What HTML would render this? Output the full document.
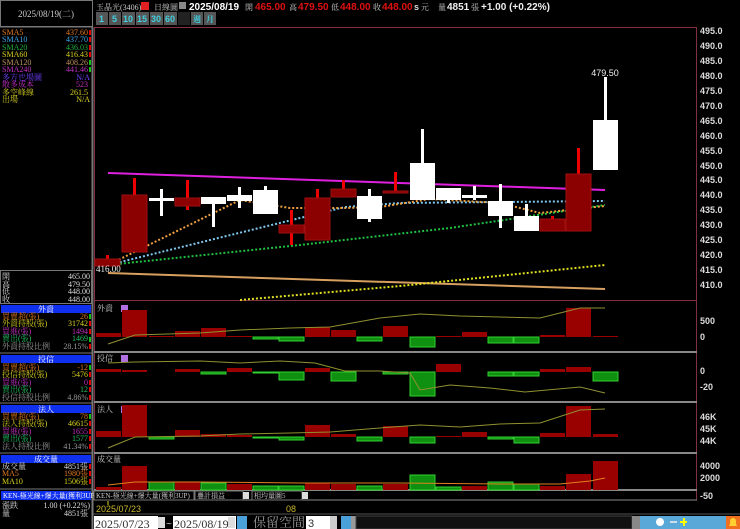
<!DOCTYPE html>
<html><head><meta charset="utf-8"><style>
body{margin:0;background:#000;width:740px;height:529px;overflow:hidden}
svg{display:block}
text{font-family:"Liberation Sans","Noto Sans CJK TC",sans-serif}
text.s,.s text{font-family:"Liberation Serif","Noto Serif CJK TC",serif;font-size:8px}
.ax text{font-size:9px;font-weight:bold;fill:#ddd}
</style></head><body>
<svg width="740" height="529" viewBox="0 0 740 529" xmlns="http://www.w3.org/2000/svg">
<rect width="740" height="529" fill="#000"/>
<rect x="0.5" y="0.5" width="92" height="26" fill="none" stroke="#777"/>
<text x="46" y="17" text-anchor="middle" class="s" fill="#ccc" style="font-size:9px">2025/08/19(二)</text>
<line x1="0" y1="27" x2="93" y2="27" stroke="#777"/>
<line x1="92.5" y1="27" x2="92.5" y2="529" stroke="#777" stroke-width="2"/>
<g class="s">
<text x="2" y="35" fill="#e07820">SMA5</text><text x="88" y="35" text-anchor="end" fill="#e07820">437.60</text>
<text x="2" y="42" fill="#40a8e8">SMA10</text><text x="88" y="42" text-anchor="end" fill="#40a8e8">437.70</text>
<text x="2" y="50" fill="#20b040">SMA20</text><text x="88" y="50" text-anchor="end" fill="#20b040">436.03</text>
<text x="2" y="57" fill="#d8d020">SMA60</text><text x="88" y="57" text-anchor="end" fill="#d8d020">416.43</text>
<text x="2" y="65" fill="#c09060">SMA120</text><text x="88" y="65" text-anchor="end" fill="#c09060">408.26</text>
<text x="2" y="72" fill="#c030c0">SMA240</text><text x="88" y="72" text-anchor="end" fill="#c030c0">441.46</text>
<text x="2" y="80" fill="#7040ff">多方也場圖</text><text x="90" y="80" text-anchor="end" fill="#7040ff">N/A</text>
<text x="2" y="87" fill="#c030c0">散多成本</text><text x="88" y="87" text-anchor="end" fill="#c030c0">523</text>
<text x="2" y="95" fill="#d8d020">多空峰線</text><text x="88" y="95" text-anchor="end" fill="#d8d020">261.5</text>
<text x="2" y="102" fill="#d8d020">出場</text><text x="90" y="102" text-anchor="end" fill="#d8d020">N/A</text>
</g>
<g fill="#e00000"><rect x="89" y="30" width="2" height="5"/><rect x="89" y="37" width="2" height="5"/><rect x="89" y="45" width="2" height="5"/><rect x="89" y="52" width="2" height="5"/></g>
<g fill="#10c010"><rect x="89" y="60" width="2" height="5"/><rect x="89" y="67" width="2" height="5"/></g>
<rect x="0.5" y="270.5" width="91" height="33" fill="none" stroke="#777"/>
<g class="s" fill="#ddd">
<text x="2" y="279">開</text><text x="90" y="279" text-anchor="end">465.00</text>
<text x="2" y="287">高</text><text x="90" y="287" text-anchor="end">479.50</text>
<text x="2" y="294">低</text><text x="90" y="294" text-anchor="end">448.00</text>
<text x="2" y="302">收</text><text x="90" y="302" text-anchor="end">448.00</text>
</g>
<g class="s">
<rect x="1" y="305" width="90" height="8" fill="#1030f0"/><text x="46" y="312" text-anchor="middle" fill="#fff">外資</text>
<text x="2" y="319" fill="#e07820">買賣超(張)</text><text x="88" y="319" text-anchor="end" fill="#e07820">26</text>
<text x="2" y="326" fill="#d8d020">外資持股(張)</text><text x="88" y="326" text-anchor="end" fill="#d8d020">31742</text>
<text x="2" y="334" fill="#c030c0">買進(張)</text><text x="88" y="334" text-anchor="end" fill="#c030c0">1494</text>
<text x="2" y="341" fill="#20c060">賣出(張)</text><text x="88" y="341" text-anchor="end" fill="#20c060">1469</text>
<text x="2" y="349" fill="#999">外資持股比例</text><text x="88" y="349" text-anchor="end" fill="#999">28.15%</text>
<line x1="0" y1="353" x2="92" y2="353" stroke="#777"/>
<rect x="1" y="355" width="90" height="8" fill="#1030f0"/><text x="46" y="362" text-anchor="middle" fill="#fff">投信</text>
<text x="2" y="370" fill="#e07820">買賣超(張)</text><text x="88" y="370" text-anchor="end" fill="#e07820">-12</text>
<text x="2" y="377" fill="#d8d020">投信持股(張)</text><text x="88" y="377" text-anchor="end" fill="#d8d020">5476</text>
<text x="2" y="385" fill="#c030c0">買進(張)</text><text x="88" y="385" text-anchor="end" fill="#c030c0">0</text>
<text x="2" y="392" fill="#20c060">賣出(張)</text><text x="88" y="392" text-anchor="end" fill="#20c060">12</text>
<text x="2" y="400" fill="#999">投信持股比例</text><text x="88" y="400" text-anchor="end" fill="#999">4.86%</text>
<line x1="0" y1="403" x2="92" y2="403" stroke="#777"/>
<rect x="1" y="405" width="90" height="8" fill="#1030f0"/><text x="46" y="412" text-anchor="middle" fill="#fff">法人</text>
<text x="2" y="419" fill="#e07820">買賣超(張)</text><text x="88" y="419" text-anchor="end" fill="#e07820">78</text>
<text x="2" y="426" fill="#d8d020">法人持股(張)</text><text x="88" y="426" text-anchor="end" fill="#d8d020">46615</text>
<text x="2" y="434" fill="#c030c0">買進(張)</text><text x="88" y="434" text-anchor="end" fill="#c030c0">1655</text>
<text x="2" y="441" fill="#20c060">賣出(張)</text><text x="88" y="441" text-anchor="end" fill="#20c060">1577</text>
<text x="2" y="449" fill="#999">法人持股比例</text><text x="88" y="449" text-anchor="end" fill="#999">41.34%</text>
<line x1="0" y1="453" x2="92" y2="453" stroke="#777"/>
<rect x="1" y="455" width="90" height="8" fill="#1030f0"/><text x="46" y="462" text-anchor="middle" fill="#fff">成交量</text>
<text x="2" y="469" fill="#ddd">成交量</text><text x="88" y="469" text-anchor="end" fill="#ddd">4851張</text>
<text x="2" y="476" fill="#e07820">MA5</text><text x="88" y="476" text-anchor="end" fill="#e07820">1980張</text>
<text x="2" y="484" fill="#d8d020">MA10</text><text x="88" y="484" text-anchor="end" fill="#d8d020">1506張</text>
<line x1="0" y1="489" x2="92" y2="489" stroke="#777"/>
<rect x="1" y="491" width="90" height="9" fill="#1030f0"/><text x="3" y="498" fill="#fff" style="font-size:7px">KEN-極光線+爆大量(獲利3UP)</text>
<text x="2" y="508" fill="#ddd">漲跌</text><text x="90" y="508" text-anchor="end" fill="#ddd">1.00 (+0.22%)</text>
<text x="2" y="516" fill="#ddd">量</text><text x="88" y="516" text-anchor="end" fill="#ddd">4851張</text>
</g>
<g fill="#10c010"><rect x="89" y="314" width="2" height="5"/><rect x="89" y="337" width="2" height="5"/><rect x="89" y="365" width="2" height="5"/><rect x="89" y="414" width="2" height="5"/></g>
<g fill="#e00000"><rect x="89" y="321" width="2" height="5"/><rect x="89" y="329" width="2" height="5"/><rect x="89" y="344" width="2" height="5"/><rect x="89" y="372" width="2" height="5"/><rect x="89" y="380" width="2" height="5"/><rect x="89" y="387" width="2" height="5"/><rect x="89" y="395" width="2" height="5"/><rect x="89" y="421" width="2" height="5"/><rect x="89" y="429" width="2" height="5"/><rect x="89" y="436" width="2" height="5"/><rect x="89" y="444" width="2" height="5"/><rect x="89" y="464" width="2" height="5"/><rect x="89" y="471" width="2" height="5"/><rect x="89" y="479" width="2" height="5"/></g>

<text x="96" y="10" class="s" fill="#ccc">玉晶光(3406)</text>
<rect x="141" y="2" width="8" height="8" fill="#e02020"/>
<text x="154" y="10" class="s" fill="#ccc">日線圖</text>
<rect x="179" y="2" width="7" height="7" fill="#888"/>
<text x="189" y="10" font-size="10" font-weight="bold" fill="#fff">2025/08/19</text>
<text x="245" y="10" class="s" fill="#ccc">開</text><text x="255" y="10" font-size="10" font-weight="bold" fill="#e01010">465.00</text>
<text x="289" y="10" class="s" fill="#ccc">高</text><text x="298" y="10" font-size="10" font-weight="bold" fill="#e01010">479.50</text>
<text x="331" y="10" class="s" fill="#ccc">低</text><text x="340" y="10" font-size="10" font-weight="bold" fill="#e01010">448.00</text>
<text x="373" y="10" class="s" fill="#ccc">收</text><text x="382" y="10" font-size="10" font-weight="bold" fill="#e01010">448.00</text>
<text x="414" y="10" font-size="9" font-weight="bold" fill="#ddd">s</text><text x="421" y="10" class="s" fill="#ccc">元</text>
<text x="438" y="10" class="s" fill="#ccc">量</text><text x="447" y="10" font-size="10" font-weight="bold" fill="#eee">4851</text><text x="471" y="10" class="s" fill="#ccc">張</text>
<text x="481" y="10" font-size="10" font-weight="bold" fill="#eee">+1.00 (+0.22%)</text>
<g font-size="9" font-weight="bold" fill="#40d0e0">
<rect x="96" y="12" width="12" height="13" fill="#555"/><text x="99" y="22">1</text>
<rect x="109" y="12" width="12" height="13" fill="#555"/><text x="112" y="22">5</text>
<rect x="122" y="12" width="13" height="13" fill="#555"/><text x="123" y="22">10</text>
<rect x="136" y="12" width="13" height="13" fill="#555"/><text x="137" y="22">15</text>
<rect x="150" y="12" width="13" height="13" fill="#555"/><text x="151" y="22">30</text>
<rect x="164" y="12" width="13" height="13" fill="#555"/><text x="165" y="22">60</text>
<rect x="178" y="12" width="12" height="13" fill="#222"/>
<rect x="191" y="12" width="12" height="13" fill="#555"/><text x="193" y="22" class="s" fill="#40d0e0">週</text>
<rect x="204" y="12" width="12" height="13" fill="#555"/><text x="206" y="22" class="s" fill="#40d0e0">月</text>
</g>

<line x1="94" y1="27.5" x2="697" y2="27.5" stroke="#803040"/>
<line x1="94.5" y1="27" x2="94.5" y2="490" stroke="#803040"/>
<line x1="696.5" y1="27" x2="696.5" y2="500" stroke="#803040"/>
<line x1="94" y1="300.5" x2="697" y2="300.5" stroke="#803040"/>
<g class="ax">
<text x="700" y="34">495.0</text><text x="700" y="49">490.0</text><text x="700" y="64">485.0</text><text x="700" y="79">480.0</text><text x="700" y="94">475.0</text><text x="700" y="109">470.0</text><text x="700" y="124">465.0</text><text x="700" y="139">460.0</text><text x="700" y="154">455.0</text><text x="700" y="169">450.0</text><text x="700" y="183">445.0</text><text x="700" y="198">440.0</text><text x="700" y="213">435.0</text><text x="700" y="228">430.0</text><text x="700" y="243">425.0</text><text x="700" y="258">420.0</text><text x="700" y="273">415.0</text><text x="700" y="288">410.0</text>
</g>
<polyline points="108,273 605,289" stroke="#d8a060" stroke-width="2" fill="none"/>
<polyline points="240,300 400,286 605,265" stroke="#e0e020" stroke-width="2" stroke-dasharray="2,2" fill="none"/>
<polyline points="108,265 300,245 450,228 605,205" stroke="#20c040" stroke-width="2" stroke-dasharray="2,2" fill="none"/>
<polyline points="108,265 345,207 400,203 605,201" stroke="#80c8f0" stroke-width="2" stroke-dasharray="2,2" fill="none"/>
<polyline points="108,265 240,200 290,208 345,208 380,207 430,199 500,203 540,213 605,206" stroke="#f0a040" stroke-width="2" stroke-dasharray="2,2" fill="none"/>
<polyline points="108,173 605,190" stroke="#e020e0" stroke-width="2" fill="none"/>
<g fill="#ee0000">
<rect x="106" y="255" width="3" height="11"/><rect x="133" y="178" width="3" height="20"/><rect x="186" y="180" width="3" height="30"/><rect x="290" y="210" width="3" height="35"/><rect x="316" y="189" width="3" height="10"/><rect x="342" y="180" width="3" height="10"/><rect x="394" y="172" width="3" height="20"/><rect x="551" y="216" width="3" height="5"/><rect x="577" y="148" width="3" height="28"/>
</g>
<g fill="#8b0000" stroke="#a01010">
<rect x="95" y="259" width="25" height="7"/><rect x="122" y="195" width="25" height="57"/><rect x="175" y="198" width="25" height="8"/><rect x="279" y="225" width="25" height="8"/><rect x="305" y="198" width="25" height="42"/><rect x="331" y="189" width="25" height="8"/><rect x="383" y="191" width="25" height="2"/><rect x="540" y="219" width="25" height="12"/><rect x="566" y="174" width="25" height="57"/>
</g>
<g fill="#fff">
<rect x="149" y="198" width="25" height="3"/><rect x="160" y="189" width="3" height="27"/>
<rect x="201" y="197" width="25" height="7"/><rect x="212" y="197" width="3" height="30"/>
<rect x="227" y="195" width="25" height="6"/><rect x="238" y="187" width="3" height="21"/>
<rect x="253" y="190" width="25" height="24"/><rect x="264" y="186" width="3" height="5"/>
<rect x="357" y="196" width="25" height="23"/><rect x="368" y="189" width="3" height="33"/>
<rect x="410" y="163" width="25" height="37"/><rect x="421" y="129" width="3" height="35"/>
<rect x="436" y="188" width="25" height="12"/><rect x="447" y="188" width="3" height="15"/>
<rect x="462" y="195" width="25" height="3"/><rect x="473" y="186" width="3" height="14"/>
<rect x="488" y="201" width="25" height="15"/><rect x="499" y="184" width="3" height="44"/>
<rect x="514" y="216" width="25" height="15"/><rect x="525" y="204" width="3" height="13"/>
<rect x="593" y="120" width="25" height="50"/><rect x="604" y="77" width="3" height="44"/>
</g>
<text x="605" y="76" text-anchor="middle" font-size="9" fill="#eee">479.50</text>
<text x="96" y="272" class="s" fill="#eee" style="font-size:9px">416.00</text>

<g stroke="#888" stroke-width="2">
<line x1="94" y1="352" x2="697" y2="352"/><line x1="94" y1="402" x2="697" y2="402"/><line x1="94" y1="453" x2="697" y2="453"/><line x1="94" y1="490" x2="697" y2="490"/>
</g>
<line x1="94" y1="500" x2="697" y2="500" stroke="#888"/>
<g class="s" fill="#ccc">
<text x="97" y="311">外資</text><text x="97" y="361">投信</text><text x="97" y="412">法人</text><text x="97" y="462">成交量</text>
</g>
<g fill="#b070e0"><rect x="121" y="305" width="7" height="7"/><rect x="121" y="355" width="7" height="7"/><rect x="121" y="406" width="7" height="7"/></g>
<g class="ax"><text x="700" y="324">500</text><text x="700" y="340">0</text><text x="700" y="374">0</text><text x="700" y="390">-20</text><text x="700" y="420">46K</text><text x="700" y="432">45K</text><text x="700" y="444">44K</text><text x="700" y="469">4000</text><text x="700" y="481">2000</text><text x="700" y="499">-50</text></g>

<g fill="#990000">
<rect x="96" y="333" width="25" height="4"/><rect x="122" y="310" width="25" height="27"/><rect x="149" y="336" width="25" height="1"/><rect x="175" y="331" width="25" height="6"/><rect x="201" y="328" width="25" height="9"/><rect x="227" y="336" width="25" height="1"/><rect x="305" y="327" width="25" height="10"/><rect x="331" y="330" width="25" height="7"/><rect x="383" y="326" width="25" height="11"/><rect x="436" y="336" width="25" height="1"/><rect x="462" y="332" width="25" height="5"/><rect x="540" y="335" width="25" height="2"/><rect x="566" y="308" width="25" height="29"/><rect x="593" y="336" width="25" height="1"/>
<rect x="96" y="369" width="25" height="3"/><rect x="122" y="370" width="25" height="2"/><rect x="175" y="369" width="25" height="3"/><rect x="227" y="368" width="25" height="4"/><rect x="305" y="368" width="25" height="4"/><rect x="436" y="364" width="25" height="8"/><rect x="540" y="369" width="25" height="3"/><rect x="566" y="367" width="25" height="5"/>
<rect x="96" y="431" width="25" height="6"/><rect x="122" y="405" width="25" height="32"/><rect x="175" y="430" width="25" height="7"/><rect x="201" y="434" width="25" height="3"/><rect x="227" y="435" width="25" height="2"/><rect x="305" y="425" width="25" height="12"/><rect x="331" y="434" width="25" height="3"/><rect x="383" y="426" width="25" height="11"/><rect x="436" y="436" width="25" height="1"/><rect x="462" y="432" width="25" height="5"/><rect x="540" y="433" width="25" height="4"/><rect x="566" y="406" width="25" height="31"/><rect x="593" y="434" width="25" height="3"/>
<rect x="96" y="487" width="25" height="3"/><rect x="122" y="466" width="25" height="24"/><rect x="175" y="482" width="25" height="8"/><rect x="227" y="484" width="25" height="6"/><rect x="305" y="483" width="25" height="7"/><rect x="331" y="484" width="25" height="6"/><rect x="383" y="484" width="25" height="6"/><rect x="462" y="486" width="25" height="4"/><rect x="540" y="486" width="25" height="4"/><rect x="566" y="474" width="25" height="16"/><rect x="593" y="461" width="25" height="29"/>
</g>
<g fill="#109010" stroke="#30d030" stroke-width="1">
<rect x="253" y="337" width="25" height="2"/><rect x="279" y="337" width="25" height="4"/><rect x="357" y="337" width="25" height="4"/><rect x="410" y="337" width="25" height="10"/><rect x="488" y="337" width="25" height="6"/><rect x="514" y="337" width="25" height="6"/>
<rect x="201" y="372" width="25" height="2"/><rect x="253" y="372" width="25" height="1"/><rect x="279" y="372" width="25" height="8"/><rect x="331" y="372" width="25" height="9"/><rect x="383" y="372" width="25" height="2"/><rect x="410" y="372" width="25" height="24"/><rect x="488" y="372" width="25" height="4"/><rect x="514" y="372" width="25" height="4"/><rect x="593" y="372" width="25" height="9"/>
<rect x="149" y="437" width="25" height="2"/><rect x="253" y="437" width="25" height="1"/><rect x="279" y="437" width="25" height="3"/><rect x="357" y="437" width="25" height="4"/><rect x="410" y="437" width="25" height="6"/><rect x="488" y="437" width="25" height="2"/><rect x="514" y="437" width="25" height="6"/>
<rect x="149" y="482" width="25" height="8"/><rect x="201" y="483" width="25" height="7"/><rect x="253" y="486" width="25" height="4"/><rect x="279" y="486" width="25" height="4"/><rect x="357" y="486" width="25" height="4"/><rect x="410" y="475" width="25" height="15"/><rect x="436" y="487" width="25" height="3"/><rect x="488" y="482" width="25" height="8"/><rect x="514" y="484" width="25" height="6"/>
</g>
<g fill="none" stroke-width="1">
<polyline points="108,344 135,335 200,333 240,330 290,328 330,327 380,318 420,314 460,316 500,317 540,318 580,308 605,308" stroke="#909030"/>
<polyline points="108,363 135,362 200,361 240,363 280,361 315,363 345,371 380,371 410,373 420,390 450,385 490,388 525,392 580,387 605,393" stroke="#909030"/>
<polyline points="108,448 135,437 200,436 240,434 290,433 330,432 380,428 420,425 460,427 500,424 540,423 580,410 605,409" stroke="#909030"/>
<polyline points="108,485 135,482 200,482 300,483 400,483 500,484 560,484 590,481 605,478" stroke="#e08020"/>
</g>
<rect x="94" y="491" width="100" height="9" fill="#000" stroke="#777"/><text x="96" y="498" fill="#ccc" class="s" style="font-size:7px">KEN-極光線+爆大量(獲利3UP)</text>
<rect x="195" y="491" width="48" height="9" fill="#000" stroke="#777"/><text x="197" y="498" fill="#ccc" class="s" style="font-size:7px">疊計損益</text>
<rect x="243" y="492" width="6" height="7" fill="#ddd"/>
<rect x="252" y="491" width="50" height="9" fill="#000" stroke="#777"/><text x="254" y="498" fill="#ccc" class="s" style="font-size:7px">相均量圖5</text>
<rect x="302" y="492" width="6" height="7" fill="#ddd"/>
<line x1="108" y1="501" x2="108" y2="505" stroke="#d8d020"/>
<text x="96" y="512" font-size="9" fill="#c8b830">2025/07/23</text>
<text x="286" y="512" font-size="9" fill="#c8b830">08</text>
<line x1="93" y1="514" x2="740" y2="514" stroke="#555"/>
<rect x="94" y="516" width="64" height="13" fill="#fff"/><text x="95" y="528" class="s" style="font-size:12px" fill="#333">2025/07/23</text><rect x="158" y="517" width="7" height="11" fill="#ddd"/>
<text x="166" y="527" fill="#ccc" font-size="10">~</text>
<rect x="173" y="516" width="63" height="13" fill="#fff"/><text x="174" y="528" class="s" style="font-size:12px" fill="#333">2025/08/19</text><rect x="228" y="517" width="7" height="11" fill="#ddd"/>
<rect x="237" y="516" width="10" height="13" fill="#4aa0d8"/>
<text x="253" y="527" fill="#999" class="s" style="font-size:13px">保留空間</text>
<rect x="306" y="516" width="24" height="13" fill="#fff"/><text x="308" y="527" font-size="11" fill="#333">3</text><rect x="330" y="516" width="7" height="13" fill="#ccc"/>
<rect x="341" y="516" width="10" height="13" fill="#4aa0d8"/><rect x="351" y="516" width="5" height="13" fill="#999"/>
<rect x="356" y="516" width="276" height="13" fill="#111" stroke="#444"/>
<rect x="632" y="516" width="8" height="13" fill="#888"/>
<rect x="640" y="516" width="100" height="13" fill="#5aa8d8"/>
<g><circle cx="660" cy="522" r="4" fill="#fff"/><rect x="670" y="521" width="7" height="2" fill="#cde"/><rect x="680" y="521" width="7" height="2" fill="#ff0"/><rect x="683" y="518" width="2" height="8" fill="#ff0"/></g>
<rect x="726" y="516" width="14" height="13" fill="#f07020"/><path d="M729 526h8l-1-2v-3a3 3 0 0 0-6 0v3z" fill="#ffd030"/>
</svg>
</body></html>
